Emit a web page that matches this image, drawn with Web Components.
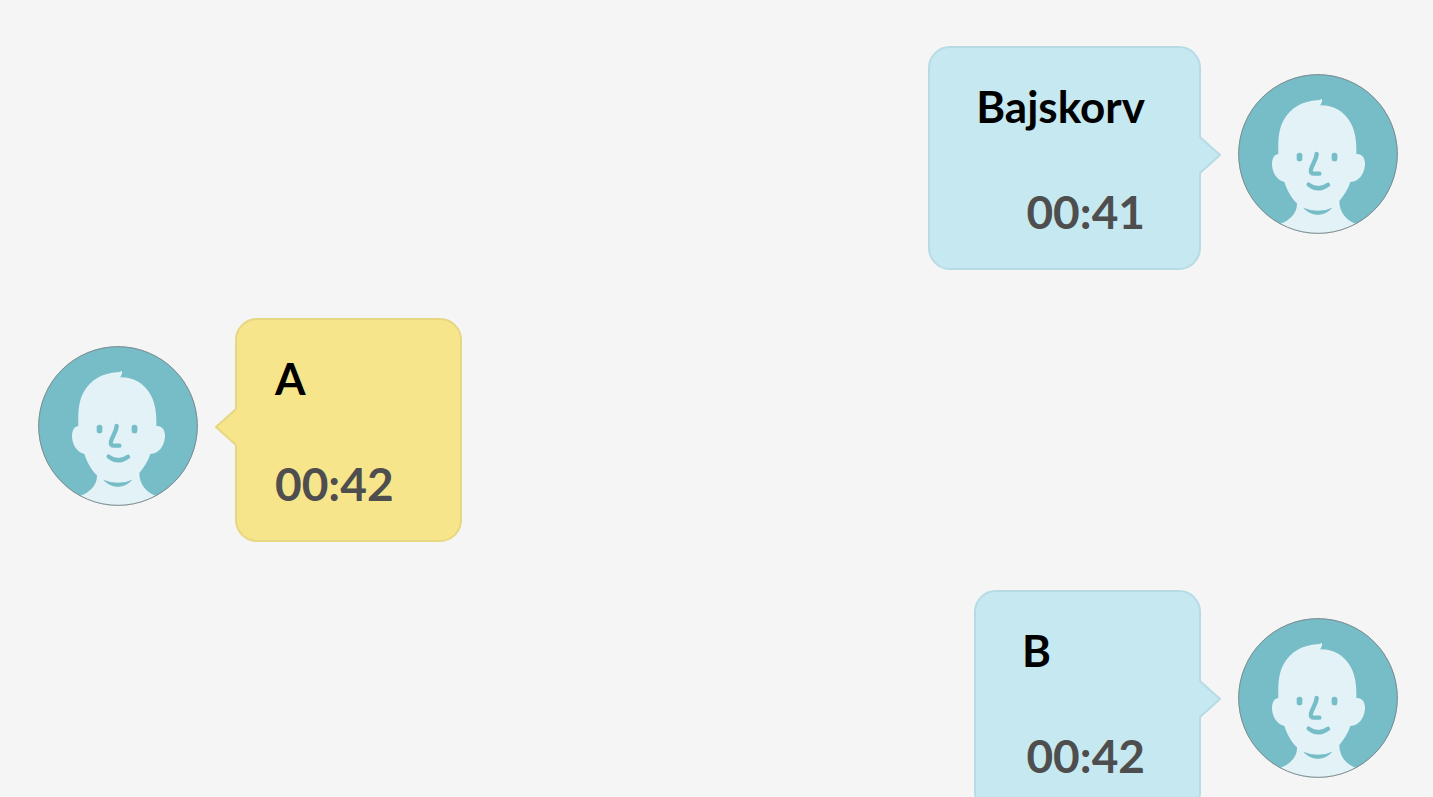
<!DOCTYPE html>
<html lang="sv">
<head>
<meta charset="utf-8">
<meta name="viewport" content="width=device-width, initial-scale=1">
<title>Chat</title>
<style>
html, body { margin: 0; background: #f5f5f5; }
</style>
</head>
<body>
<chat-log>
  <chat-message side="right"><span slot="text">Bajskorv</span><time slot="time">00:41</time></chat-message>
  <chat-message side="left"><span slot="text">A</span><time slot="time">00:42</time></chat-message>
  <chat-message side="right"><span slot="text">B</span><time slot="time">00:42</time></chat-message>
</chat-log>

<template id="chat-log">
  <style>
    :host {
      display: flex; flex-direction: column; gap: 48px;
      box-sizing: border-box; height: 100vh; overflow: hidden;
      padding: 46px 35px 0 38px;
      font-family: Lato, "Liberation Sans", sans-serif;
      font-weight: 700;
    }
  </style>
  <slot></slot>
</template>

<template id="chat-avatar">
  <style>
    :host { display: block; flex: none; width: 160px; height: 160px; }
    svg { display: block; width: 100%; height: 100%; }
  </style>
  <svg viewBox="24 24 480 480" aria-hidden="true">
    <defs><clipPath id="disc"><circle cx="264" cy="264" r="239"/></clipPath></defs>
    <circle cx="264" cy="264" r="239" fill="#76bdc8"/>
    <g clip-path="url(#disc)">
      <path fill="#e2f2f6" d="M145 264C144 220 146 190 160 164C182 124 218 106 262 103Q272 101 275 98C278 104 275 112 270 118C306 117 340 133 360 167C376 194 380 225 379 264C396 262 406 277 405 296C403 323 387 347 361 348C355 366 344 387 328 405C328 437 346 461 376 473L400 510H128L152 473C181 462 202 440 201 412C183 396 170 369 163 348C141 342 127 320 126 296C126 277 132 266 145 264Z"/>
      <rect x="200" y="260" width="17" height="26" rx="8" fill="#76bdc8"/>
      <rect x="305" y="260" width="17" height="26" rx="8" fill="#76bdc8"/>
      <g fill="none" stroke="#76bdc8" stroke-width="13" stroke-linecap="round" stroke-linejoin="round">
        <path d="M260 264C259 280 248 293 243 310Q240 324 254 323L268 323"/>
        <path d="M236 356Q264 378 294 356"/>
      </g>
      <path fill="#76bdc8" d="M220 425Q264 444 307 425C283 453 244 453 220 425Z"/>
    </g>
    <circle cx="264" cy="264" r="238" fill="none" stroke="#808b8e" stroke-width="3"/>
  </svg>
</template>

<template id="chat-message">
  <style>
    :host {
      --fill: #c6e8f1; --line: #b7dbe4;
      display: flex; flex: none; align-items: flex-start; gap: 37px;
      flex-direction: row-reverse;
    }
    :host([side="left"]) {
      --fill: #f6e58b; --line: #e7d682;
      flex-direction: row;
    }
    chat-avatar { margin-top: 28px; }
    .bubble {
      position: relative; box-sizing: border-box;
      min-width: 227px; min-height: 224px;
      padding: 24px 54px 24px 46px;
      display: flex; flex-direction: column; gap: 42px;
      background: var(--fill); border: 2px solid var(--line); border-radius: 22px;
    }
    :host([side="left"]) .bubble { padding: 24px 64px 24px 38px; }
    .text, .time { white-space: nowrap; }
    .text { font-size: 44px; line-height: 68px; color: #000; }
    .time { font-size: 46px; line-height: 60px; color: #4e4e4e; }
    :host([side="right"]) .time { text-align: right; }
    .tail { position: absolute; top: 88px; left: 100%; width: 24px; height: 38px; }
    :host([side="left"]) .tail { left: auto; right: 100%; transform: scaleX(-1); }
    .tail path { fill: var(--fill); }
    .tail .edge { fill: none; stroke: var(--line); stroke-width: 2; }
  </style>
  <chat-avatar></chat-avatar>
  <div class="bubble">
    <div class="text"><slot name="text"></slot></div>
    <div class="time"><slot name="time"></slot></div>
    <svg class="tail" viewBox="0 0 24 38" aria-hidden="true">
      <path d="M0 1H1L21 19L1 37H0Z"/>
      <path class="edge" d="M1 1L21 19L1 37"/>
    </svg>
  </div>
</template>

<script>
class TemplateElement extends HTMLElement {
  constructor() {
    super();
    const template = document.getElementById(this.localName);
    this.attachShadow({ mode: "open" }).append(template.content.cloneNode(true));
  }
}
for (const name of ["chat-avatar", "chat-message", "chat-log"]) {
  customElements.define(name, class extends TemplateElement {});
}
</script>
</body>
</html>
